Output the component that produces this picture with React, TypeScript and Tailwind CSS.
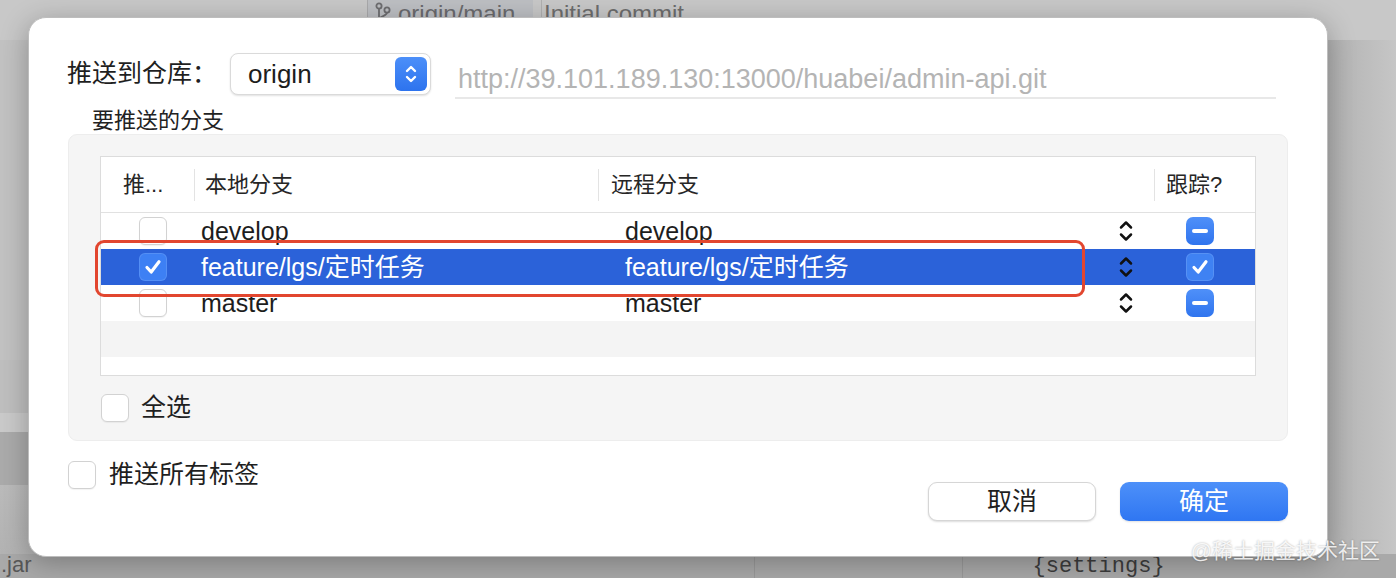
import React from "react";

const font = "font-['Liberation_Sans','Noto_Sans_CJK_SC',sans-serif]";

type Branch = { local: string; remote: string; push: boolean; track: boolean };

const branches: Branch[] = [
  { local: "develop", remote: "develop", push: false, track: false },
  { local: "feature/lgs/定时任务", remote: "feature/lgs/定时任务", push: true, track: true },
  { local: "master", remote: "master", push: false, track: false },
];

const CheckMark = () => (
  <svg width="20" height="20" viewBox="0 0 20 20" fill="none" stroke="#fff" strokeWidth="3.2" strokeLinecap="round" strokeLinejoin="round">
    <path d="M4 10.5l4.2 4.5L16 4.8" />
  </svg>
);

const Box = ({ on }: { on?: boolean }) =>
  on ? (
    <span className="flex h-[28px] w-[28px] shrink-0 items-center justify-center rounded-[6px] bg-[#3d80f4] shadow-[inset_0_0_0_1px_rgba(255,255,255,0.12)]">
      <CheckMark />
    </span>
  ) : (
    <span className="block h-[28px] w-[28px] shrink-0 rounded-[6px] border border-[#d2d2d2] bg-white shadow-[0_1px_1px_rgba(0,0,0,0.05)]" />
  );

const Track = ({ on }: { on: boolean }) =>
  on ? (
    <span className="flex h-[28px] w-[28px] items-center justify-center rounded-[6px] bg-[#3f82f3] shadow-[inset_0_0_0_1px_rgba(255,255,255,0.12)]">
      <CheckMark />
    </span>
  ) : (
    <span className="flex h-[28px] w-[28px] items-center justify-center rounded-[7px] bg-gradient-to-b from-[#4f90f9] to-[#2f74ee]">
      <span className="block h-[4px] w-[16px] rounded-full bg-white" />
    </span>
  );

const Stepper = ({ color = "#111" }: { color?: string }) => (
  <svg width="16" height="24" viewBox="0 0 16 24" fill="none" stroke={color} strokeWidth="2.5" strokeLinecap="round" strokeLinejoin="round">
    <path d="M3 8.5l5-5 5 5" />
    <path d="M3 15.5l5 5 5-5" />
  </svg>
);

const HeaderCell = ({ label, sep, pad }: { label: string; sep?: boolean; pad: string }) => (
  <div className="flex items-center">
    {sep && <span className="block h-[32px] w-px bg-[#e3e3e3]" />}
    <span className={`${pad} text-[22px] text-[#262626]`}>{label}</span>
  </div>
);

const Row = ({ b, odd }: { b: Branch; odd: boolean }) => {
  const sel = b.push;
  const txt = sel ? "text-white" : "text-[#1d1d1d]";
  return (
    <div
      className={`grid h-[36px] grid-cols-[93px_404px_556px_1fr] overflow-hidden ${
        sel ? "bg-[#2b62d9]" : odd ? "bg-[#f4f4f4]" : "bg-white"
      }`}
    >
      <div className="flex items-center pl-[38px]">
        <Box on={b.push} />
      </div>
      <div className={`pl-[7px] pt-[4px] text-[25px] leading-[28px] ${txt}`}>{b.local}</div>
      <div className="flex items-start justify-between pr-[20px]">
        <span className={`pl-[27px] pt-[4px] text-[25px] leading-[28px] ${txt}`}>{b.remote}</span>
        <span className="pt-[6px]">
          <Stepper />
        </span>
      </div>
      <div className="flex items-center pl-[32px]">
        <Track on={b.track} />
      </div>
    </div>
  );
};

export default function App() {
  return (
    <div className={`relative h-[578px] w-[1396px] overflow-hidden bg-[#c5c5c5] ${font}`}>
      {/* app window behind the sheet */}
      <div className="flex h-full flex-col">
        <div className="flex h-[40px] shrink-0 bg-[#c8c8c8]">
          <div className="ml-[367px] flex h-full w-[166px] items-start gap-[6px] border-l border-[#a9a9ab] bg-[#bdbfc3] pl-[6px]">
            <svg width="18" height="22" viewBox="0 0 18 22" fill="none" stroke="#6d6d70" strokeWidth="1.8" className="mt-[2px]">
              <circle cx="5" cy="4" r="2.6" />
              <circle cx="13" cy="8" r="2.6" />
              <path d="M5 6.6V18M13 10.6c0 4-8 3-8 7.4" />
            </svg>
            <span className="-mt-[4px] text-[24px] text-[#6a6a6d]">origin/main</span>
          </div>
          <span className="-mt-[4px] ml-[8px] border-l border-[#b0b0b0] pl-[2px] text-[24px] text-[#6d6d6d]">Initial commit</span>
        </div>
        <div className="flex flex-1">
          <div className="flex w-[60px] flex-col">
            <div className="h-[320px] bg-[#c2c2c2]" />
            <div className="h-[53px] bg-[#bfbfbf]" />
            <div className="h-[19px] bg-[#cacaca]" />
            <div className="h-[53px] bg-[#ababab]" />
            <div className="flex-1 bg-gradient-to-b from-[#bbbbbb] to-[#b3b3b3]" />
          </div>
          <div className="flex-1" />
          <div className="w-[80px] bg-gradient-to-r from-[#aeaeae] to-[#c6c6c6]" />
        </div>
        <div className="relative flex h-[24px] shrink-0 items-end bg-[#a9a9a9]">
          <span className="ml-[1px] pb-[1px] text-[22px] leading-[24px] text-[#585858]">.jar</span>
          <span className="ml-[722px] h-full w-px bg-[#9a9a9a]" />
          <span className="ml-[207px] h-full w-px bg-[#9a9a9a]" />
          <span className="ml-[70px] font-['Liberation_Mono',monospace] text-[22px] leading-[22px] text-[#3d3d3d]">{"{settings}"}</span>
        </div>
      </div>

      {/* sheet */}
      <div className="absolute left-[28px] top-[17px] h-[540px] w-[1300px] rounded-[18px] border border-[#bdbdbd] bg-white pl-[38px] pt-[35px] shadow-[0_6px_28px_rgba(0,0,0,0.28)]">
        <div className="flex items-start">
          <div className="flex h-[42px] w-[163px] items-center text-[25px] text-[#1f1f1f]">推送到仓库：</div>
          <div className="flex h-[42px] w-[201px] items-center justify-between rounded-[8px] border border-[#dadada] bg-white pl-[17px] pr-[3px] shadow-[0_1px_2px_rgba(0,0,0,0.12)]">
            <span className="text-[26px] text-[#1d1d1d]">origin</span>
            <span className="flex h-[34px] w-[32px] items-center justify-center rounded-[6px] bg-gradient-to-b from-[#4c8ff9] to-[#2d73ee]">
              <svg width="14" height="24" viewBox="0 0 14 24" fill="none" stroke="#fff" strokeWidth="2.4" strokeLinecap="round" strokeLinejoin="round">
                <path d="M3 9l4-4 4 4" />
                <path d="M3 15l4 4 4-4" />
              </svg>
            </span>
          </div>
          <div className="ml-[24px] flex h-[46px] w-[821px] items-center border-b-2 border-[#e8e8e8] pl-[3px] pt-[8px] text-[27px] text-[#b4b4b4]">
            http://39.101.189.130:13000/huabei/admin-api.git
          </div>
        </div>

        <div className="ml-[25px] mt-[9px] text-[22px] leading-[26px] text-[#222]">要推送的分支</div>

        <div className="ml-[1px] h-[307px] w-[1220px] rounded-[9px] border border-[#ededed] bg-[#f5f5f5] px-[31px] pt-[21px]">
          <div className="relative">
            <div className="h-[220px] overflow-hidden border border-[#dcdcdc] bg-white">
              <div className="grid h-[56px] grid-cols-[93px_404px_556px_1fr] border-b border-[#e1e1e1] bg-white">
                <HeaderCell label="推..." pad="pl-[22px]" />
                <HeaderCell label="本地分支" sep pad="pl-[10px]" />
                <HeaderCell label="远程分支" sep pad="pl-[12px]" />
                <HeaderCell label="跟踪?" sep pad="pl-[11px]" />
              </div>
              {branches.map((b, i) => (
                <Row key={b.local} b={b} odd={i % 2 === 1} />
              ))}
              <div className="h-[36px] bg-[#f4f4f4]" />
            </div>
            <div className="pointer-events-none absolute left-[-5px] top-[84px] h-[57px] w-[990px] rounded-[9px] border-[3px] border-[#e2462f]" />
          </div>

          <div className="ml-[1px] mt-[13px] flex items-center gap-[12px]">
            <Box />
            <span className="text-[25px] text-[#1f1f1f]">全选</span>
          </div>
        </div>

        <div className="ml-[1px] flex w-[1220px] items-start justify-between">
          <div className="mt-[15px] flex items-center gap-[13px]">
            <Box />
            <span className="text-[25px] text-[#1f1f1f]">推送所有标签</span>
          </div>
          <div className="mt-[41px] flex gap-[24px]">
            <button className="flex h-[39px] w-[168px] items-center justify-center rounded-[9px] border border-[#d6d6d6] bg-white text-[25px] text-[#1f1f1f] shadow-[0_1px_2px_rgba(0,0,0,0.14)]">
              取消
            </button>
            <button className="flex h-[39px] w-[168px] items-center justify-center rounded-[9px] bg-gradient-to-b from-[#4d90f9] to-[#2f76f2] text-[25px] text-white shadow-[0_1px_2px_rgba(0,0,0,0.12)]">
              确定
            </button>
          </div>
        </div>
      </div>

      {/* watermark */}
      <div className="absolute bottom-[15px] right-[16px] text-[21px] leading-[24px] text-white/85 [text-shadow:0_0_2px_rgba(0,0,0,0.35)]">
        @稀土掘金技术社区
      </div>
    </div>
  );
}
